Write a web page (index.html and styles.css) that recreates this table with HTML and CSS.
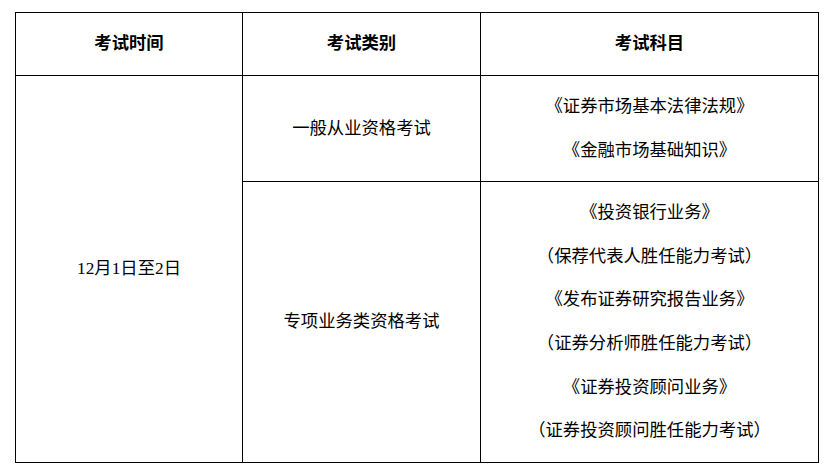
FILE: index.html
```html
<!DOCTYPE html>
<html lang="zh-CN">
<head>
<meta charset="utf-8">
<title>考试安排</title>
<link rel="stylesheet" href="styles.css">
</head>
<body>
<table class="exam-table">
  <colgroup>
    <col class="col-time">
    <col class="col-type">
    <col class="col-subject">
  </colgroup>
  <thead>
    <tr class="row-head">
      <th>考试时间</th>
      <th>考试类别</th>
      <th>考试科目</th>
    </tr>
  </thead>
  <tbody>
    <tr class="row-general">
      <td rowspan="2" class="cell-date">12月1日至2日</td>
      <td>一般从业资格考试</td>
      <td>
        <div class="lines">
          <p>《证券市场基本法律法规》</p>
          <p>《金融市场基础知识》</p>
        </div>
      </td>
    </tr>
    <tr class="row-special">
      <td>专项业务类资格考试</td>
      <td>
        <div class="lines">
          <p>《投资银行业务》</p>
          <p>（保荐代表人胜任能力考试）</p>
          <p>《发布证券研究报告业务》</p>
          <p>（证券分析师胜任能力考试）</p>
          <p>《证券投资顾问业务》</p>
          <p>（证券投资顾问胜任能力考试）</p>
        </div>
      </td>
    </tr>
  </tbody>
</table>
</body>
</html>
```

FILE: styles.css
```css
html, body {
  background: #ffffff;
}

body {
  margin: 12px 0 0 15px;
  font-family: "Liberation Serif", "Noto Sans CJK SC", serif;
  font-size: 17.33px;
  color: #000000;
}

.exam-table {
  border-collapse: collapse;
  table-layout: fixed;
  width: 803px;
}

.col-time { width: 227px; }
.col-type { width: 238px; }
.col-subject { width: 338px; }

.exam-table th,
.exam-table td {
  border: 1px solid #000000;
  padding: 0;
  text-align: center;
  vertical-align: middle;
  line-height: 20px;
}

.exam-table th {
  font-weight: bold;
}

.row-head { height: 63px; }
.row-general { height: 106px; }
.row-special { height: 281px; }

.lines p {
  margin: 0;
  line-height: 43.6px;
  white-space: nowrap;
}
```
